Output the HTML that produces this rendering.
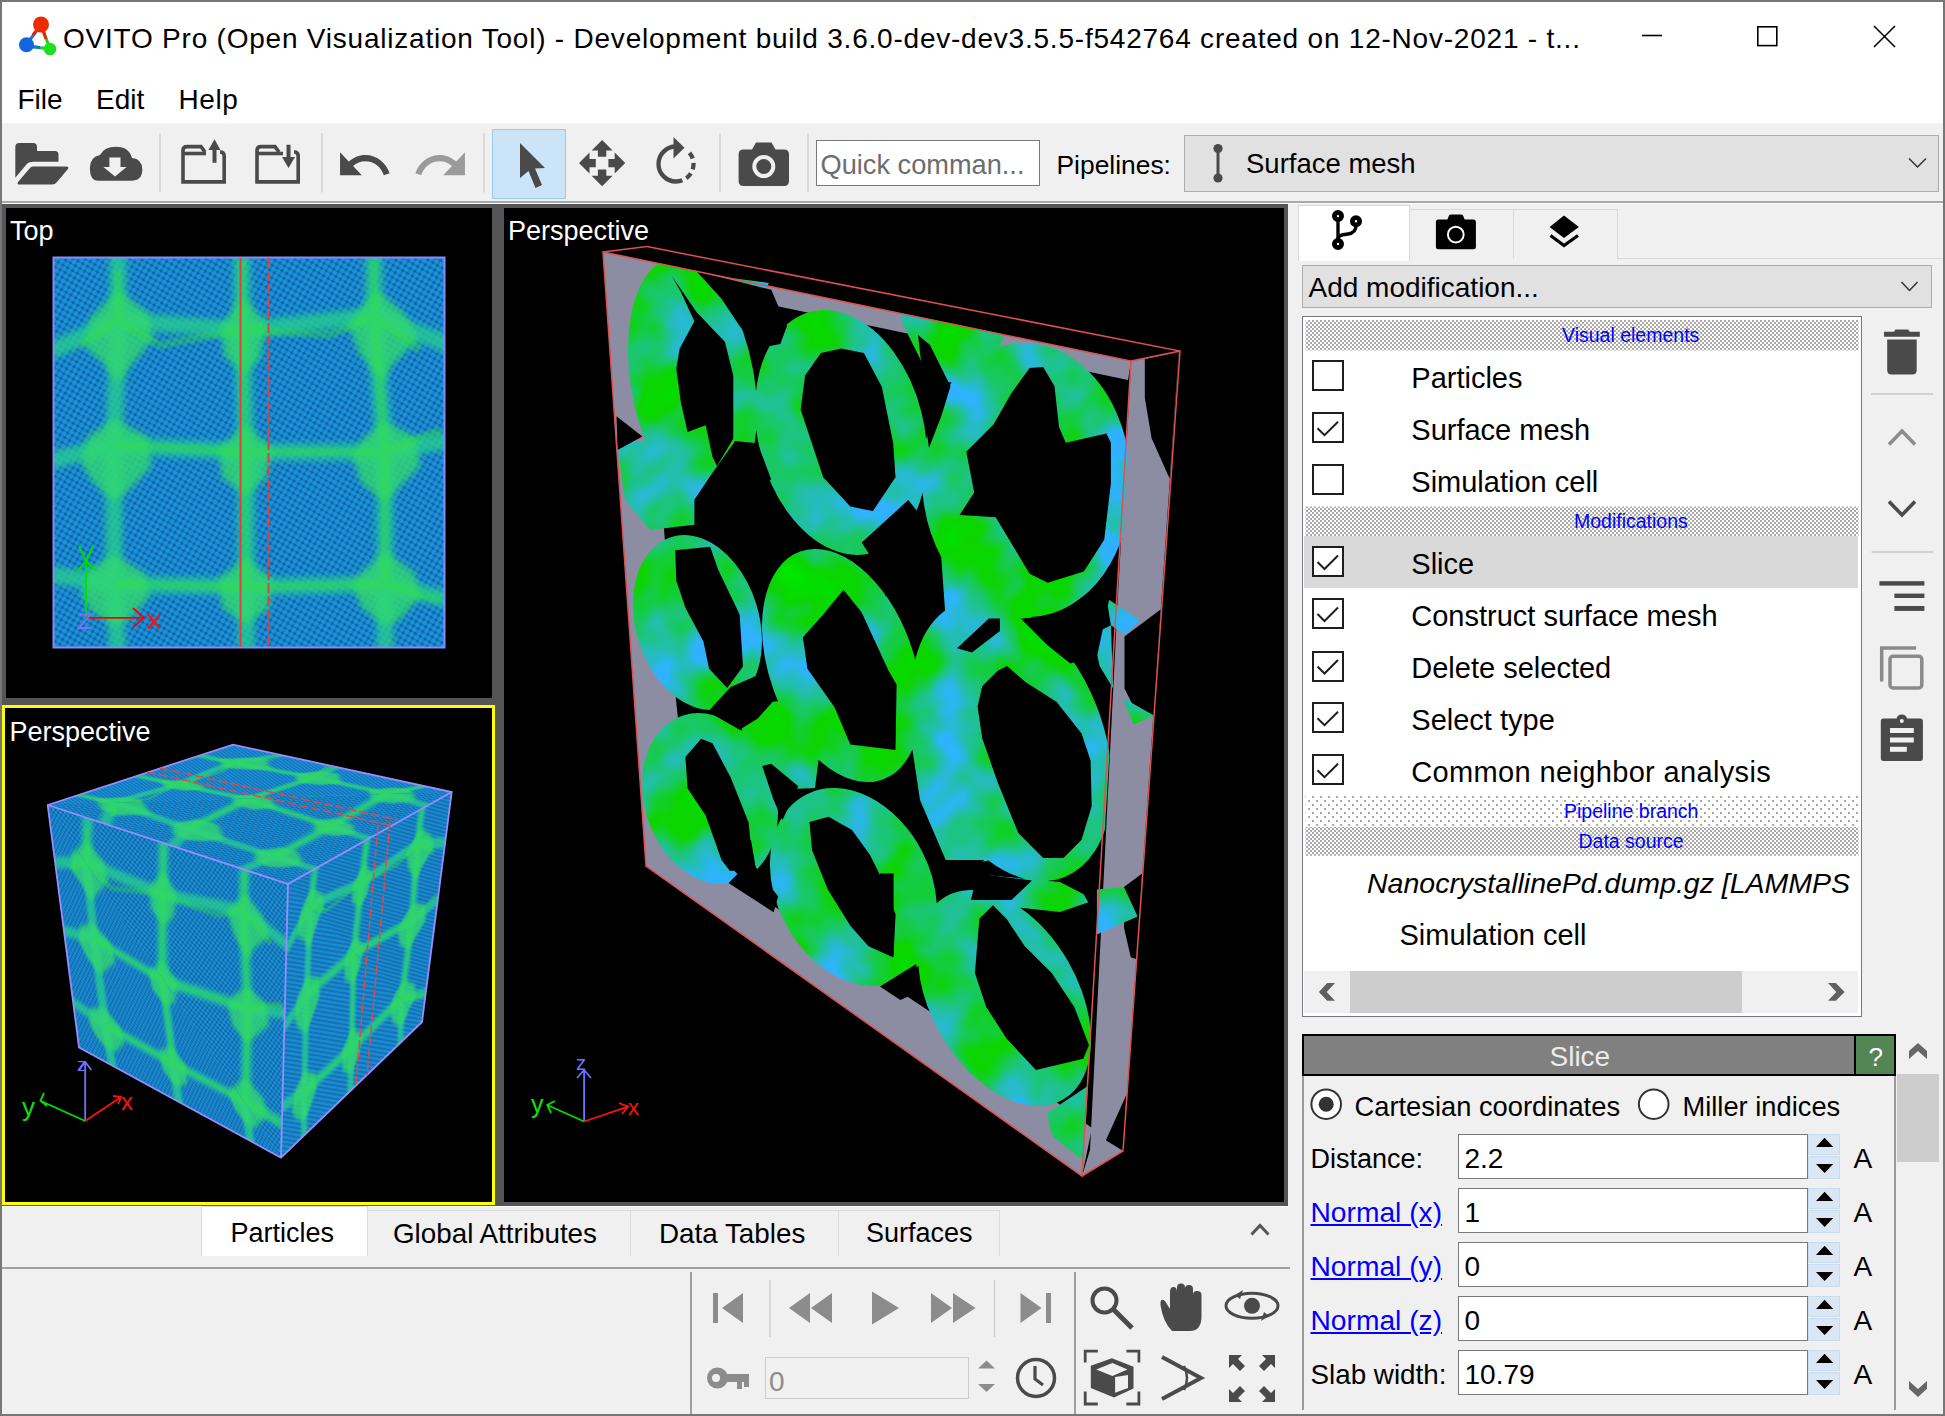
<!DOCTYPE html>
<html><head><meta charset="utf-8">
<style>
*{box-sizing:border-box}
html,body{margin:0;padding:0}
body{width:1945px;height:1416px;position:relative;overflow:hidden;background:#f0f0f0;font-family:"Liberation Sans",sans-serif;color:#000}
.a{position:absolute}
.t{position:absolute;white-space:pre;line-height:1}
svg{position:absolute;overflow:visible}
</style></head><body>

<!-- title bar -->
<div class="a" style="left:0;top:0;width:1945px;height:123px;background:#fff"></div>
<div class="a" style="left:0;top:123px;width:1945px;height:2px;background:#f4f4f4"></div>


<!-- logo -->
<svg style="left:0;top:0" width="80" height="70">
 <line x1="41" y1="24.5" x2="26.5" y2="44.6" stroke="#1a6fe8" stroke-width="3"/>
 <line x1="41" y1="24.5" x2="33" y2="35" stroke="#f02000" stroke-width="3"/>
 <line x1="41" y1="24.5" x2="50" y2="49" stroke="#20d020" stroke-width="3"/>
 <line x1="41" y1="24.5" x2="46" y2="39" stroke="#f02000" stroke-width="3"/>
 <line x1="26.5" y1="46" x2="50" y2="49" stroke="#20d020" stroke-width="3"/>
 <line x1="26.5" y1="46" x2="40" y2="47.5" stroke="#1a6fe8" stroke-width="3"/>
 <circle cx="41" cy="24.5" r="8" fill="#f02a00"/>
 <circle cx="26.5" cy="44.8" r="7.5" fill="#1464e0"/>
 <circle cx="50" cy="49" r="6.3" fill="#1ee01e"/>
</svg>
<div class="t" style="left:63px;top:25px;font-size:28px;letter-spacing:0.78px">OVITO Pro (Open Visualization Tool) - Development build 3.6.0-dev-dev3.5.5-f542764 created on 12-Nov-2021 - t...</div>
<svg style="left:0;top:0" width="1945" height="70">
 <line x1="1642" y1="35.5" x2="1662" y2="35.5" stroke="#000" stroke-width="1.6"/>
 <rect x="1757.8" y="26.8" width="19" height="18.8" fill="none" stroke="#000" stroke-width="1.6"/>
 <path d="M1874,26 L1895,47 M1895,26 L1874,47" stroke="#000" stroke-width="1.6"/>
</svg>
<!-- menu -->
<div class="t" style="left:17.5px;top:86px;font-size:28px">File</div>
<div class="t" style="left:96px;top:86px;font-size:28px">Edit</div>
<div class="t" style="left:178.5px;top:86px;font-size:28px;letter-spacing:0.6px">Help</div>

<!-- toolbar -->
<div class="a" style="left:492px;top:128.5px;width:74px;height:70px;background:#cce4f7;border:1px solid #99c9ef"></div>
<svg style="left:0;top:0" width="1945" height="210">
 <g fill="#4a4a4a">
  <path d="M15.3,177.8 V147 Q15.3,143 19.5,143 H33 Q37,143 37,147 V151 H55 Q58.5,151 58.5,154.5 V161.7 H33 Q28.5,161.7 26,165 Z"/>
  <path d="M33,166.5 H66 Q70,166.5 67.5,169.5 L57,182 Q55,184.6 52,184.6 H20 Q16,184.6 18.5,181.5 L29.5,168.5 Q31,166.5 33,166.5 Z"/>
  <!-- cloud -->
  <path d="M98,180.8 Q89.9,180.8 89.9,168 Q89.9,157 100,155 Q104,146.7 116,146.7 Q129,146.7 132,158 Q142.3,159 142.3,169.5 Q142.3,180.8 131,180.8 Z"/>
 </g>
 <path d="M109.4,157.4 H120.5 V167 H126.6 L115,176.6 L103.4,167 H109.4 Z" fill="#f0f0f0"/>
 <g stroke="#d2d2d2" stroke-width="1.5"><line x1="160" y1="133" x2="160" y2="192.5"/><line x1="322" y1="133" x2="322" y2="192.5"/><line x1="484" y1="133" x2="484" y2="192.5"/><line x1="720" y1="133" x2="720" y2="192.5"/><line x1="808" y1="133" x2="808" y2="192.5"/></g>
 <!-- export/import folders -->
 <g fill="none" stroke="#4a4a4a" stroke-width="3.6">
  <path d="M205,152 L201,146.6 H187 Q183,146.6 183,150.6 V181.9 H224.2 V156 Q224.2,152 220,152"/>
  <path d="M183,153.5 H206"/>
  <path d="M279,152 L275,146.6 H261 Q257,146.6 257,150.6 V181.9 H298.2 V156 Q298.2,152 294,152"/>
  <path d="M257,153.5 H283"/>
 </g>
 <g fill="#4a4a4a">
  <path d="M212.5,162.7 V150 H208.5 L214.5,139.3 L220.5,150 H216.5 V162.7 Z"/>
  <path d="M286.5,144.8 V157 H282 L288.5,168 L295,157 H290.5 V144.8 Z"/>
 </g>
 <!-- undo redo -->
 <g transform="translate(335.2,134.4) scale(2.42,2.56)"><path fill="#4a4a4a" d="M12.5 8c-2.65 0-5.05.99-6.9 2.6L2 7v9h9l-3.62-3.62c1.39-1.16 3.16-1.88 5.12-1.88 3.54 0 6.55 2.31 7.6 5.5l2.37-.78C21.08 11.03 17.15 8 12.5 8z"/></g>
 <g transform="translate(469.8,134.4) scale(-2.42,2.56)"><path fill="#9b9b9b" d="M12.5 8c-2.65 0-5.05.99-6.9 2.6L2 7v9h9l-3.62-3.62c1.39-1.16 3.16-1.88 5.12-1.88 3.54 0 6.55 2.31 7.6 5.5l2.37-.78C21.08 11.03 17.15 8 12.5 8z"/></g>
 <!-- cursor -->
 <path fill="#4a4a4a" d="M520,143 L520,178 L528.5,171 L535.5,188 L542,185 L535,168.5 L545,168 Z"/>
 <!-- move -->
 <g transform="translate(576.9,137.9) scale(2.1)"><path fill="#4a4a4a" d="M10 9h4V6h3l-5-5-5 5h3v3zm-1 1H6V7l-5 5 5 5v-3h3v-4zm14 2l-5-5v3h-3v4h3v3l5-5zm-9 3h-4v3H7l5 5 5-5h-3v-3z"/></g>
 <!-- rotate -->
 <path d="M676,146.5 A17.5,17.5 0 0 0 676,181.5" fill="none" stroke="#4a4a4a" stroke-width="4.3"/>
 <path d="M676,181.5 A17.5,17.5 0 0 0 688.4,151.6" fill="none" stroke="#4a4a4a" stroke-width="4.3" stroke-dasharray="6.5,4.5"/>
 <path d="M673.5,137 L684.5,147.7 L673.5,158.5 Z" fill="#4a4a4a"/>
 <!-- camera -->
 <path fill="#4a4a4a" d="M752,149.5 L756,142.5 H771.5 L775.5,149.5 H784 Q789,149.5 789,154.5 V181 Q789,186 784,186 H743.5 Q738.6,186 738.6,181 V154.5 Q738.6,149.5 743.5,149.5 Z"/>
 <circle cx="763.8" cy="166.5" r="9.5" fill="none" stroke="#f0f0f0" stroke-width="4"/>
</svg>
<div class="a" style="left:816px;top:140px;width:224px;height:46px;background:#fff;border:1px solid #7a7a7a"></div>
<div class="t" style="left:820.5px;top:151px;font-size:27.2px;color:#6d6d6d">Quick comman...</div>
<div class="t" style="left:1056.5px;top:152px;font-size:26.4px">Pipelines:</div>
<div class="a" style="left:1184px;top:134.5px;width:755px;height:57px;background:#e1e1e1;border:1px solid #adadad"></div>
<svg style="left:0;top:0" width="1945" height="210">
 <line x1="1218" y1="148" x2="1218" y2="178" stroke="#4a4a4a" stroke-width="3"/>
 <circle cx="1218" cy="148.5" r="4.6" fill="#4a4a4a"/><circle cx="1218" cy="178" r="4.6" fill="#4a4a4a"/>
 <path d="M1909,158.5 L1917.5,167 L1926,158.5" fill="none" stroke="#333" stroke-width="1.5"/>
</svg>
<div class="t" style="left:1246px;top:150px;font-size:27.5px">Surface mesh</div>
<!-- toolbar bottom lines -->
<div class="a" style="left:0;top:201px;width:1945px;height:2px;background:#a9a9a9"></div>
<div class="a" style="left:0;top:203px;width:1945px;height:1px;background:#fafafa"></div>

<!-- viewport area -->
<div class="a" style="left:2px;top:204px;width:1286px;height:1002px;background:#555"></div>


<!-- viewports -->
<div class="a" style="left:6px;top:208px;width:486px;height:490px;background:#000"></div>
<div class="a" style="left:2px;top:705px;width:493px;height:500px;background:#000;border:3.5px solid #ff0"></div>
<div class="a" style="left:504px;top:208px;width:780px;height:994px;background:#000"></div>
<svg style="left:0;top:0" width="1945" height="1416">
 <defs>
  <pattern id="atoms" width="5.5" height="5.5" patternUnits="userSpaceOnUse" patternTransform="rotate(30)">
   <rect width="5.5" height="5.5" fill="#10609c"/>
   <circle cx="2.75" cy="2.75" r="2.5" fill="#1b92dc"/>
  </pattern>
  <filter id="bl3"><feGaussianBlur stdDeviation="3"/></filter>
  <filter id="bl1"><feGaussianBlur stdDeviation="1.2"/></filter>
  <clipPath id="topclip"><rect x="53" y="257" width="392" height="391"/></clipPath>
 </defs>
 <!-- TOP VIEW -->
 <g id="tv">
 <rect x="53" y="257" width="392" height="391" fill="url(#atoms)"/>
 <g clip-path="url(#topclip)" id="topnet">
  <g fill="none" stroke="#26cc90" stroke-width="17" stroke-linejoin="round" stroke-linecap="round" filter="url(#bl3)" opacity="0.8">
   <path d="M118,250 L118,320 L53,350 M118,320 L242,330 L374,316 L450,345 M242,250 L242,330 L246,452 L246,587 L246,660 M374,250 L374,316 L385,452 L385,584 L385,660 M118,320 L114,445 L53,460 M114,445 L246,452 L385,452 L450,440 M114,445 L114,584 L53,575 M114,584 L246,587 L385,584 L450,600 M114,584 L118,660"/>
  </g>
  <g fill="#30d870" filter="url(#bl3)" opacity="0.8">
   <path d="M118.0,289.8 L147.5,312.3 L153.4,338.9 L131.0,365.4 L118.0,383.1 L102.7,362.5 L85.0,347.7 L89.6,318.2 Z"/>
   <path d="M242.9,296.6 L266.5,323.2 L260.6,358.6 L245.1,373.4 L223.9,355.7 L221.0,326.1 Z"/>
   <path d="M376.5,289.8 L403.6,312.3 L418.4,338.9 L391.8,365.4 L383.0,383.1 L359.3,353.6 L347.5,324.1 Z"/>
   <path d="M114.0,418.7 L147.0,436.4 L151.8,465.9 L129.3,489.5 L114.0,501.3 L93.9,483.6 L81.0,463.0 L88.0,436.4 Z"/>
   <path d="M246.0,424.6 L272.0,448.2 L266.1,477.7 L246.0,495.4 L221.8,477.7 L218.9,448.2 Z"/>
   <path d="M385.0,421.6 L414.5,436.4 L420.4,465.9 L399.8,486.6 L385.0,501.3 L361.4,483.6 L352.5,457.0 L364.3,436.4 Z"/>
   <path d="M114.0,554.6 L144.1,572.3 L150.0,595.9 L129.3,619.5 L114.0,625.4 L93.9,613.6 L81.0,595.9 L88.0,569.3 Z"/>
   <path d="M246.0,557.5 L272.0,578.2 L269.0,607.7 L246.0,624.3 L221.8,607.7 L218.9,578.2 Z"/>
   <path d="M385.0,551.6 L414.5,572.3 L420.4,595.9 L399.8,619.5 L385.0,625.4 L361.4,607.7 L352.5,584.1 L364.3,569.3 Z"/>
  </g>
  <g fill="none" stroke="#30e040" stroke-width="8" stroke-linejoin="round" filter="url(#bl1)" opacity="0.35">
   <path d="M118,270 L118,320 L80,345 M118,320 L160,345 L242,330 L330,335 L374,316 L420,350 M242,260 L246,587 M374,260 L374,316 L385,452 L385,584 M114,445 L246,452 L385,452 L440,430 M114,584 L246,587 L385,584 L440,600"/>
  </g>
 </g>
 </g>
 <rect x="53.5" y="257.5" width="391" height="390" fill="none" stroke="#8a8aff" stroke-width="2"/>
 <line x1="240.5" y1="258" x2="240.5" y2="647" stroke="#e04040" stroke-width="2"/>
 <line x1="268.5" y1="258" x2="268.5" y2="647" stroke="#e04040" stroke-width="2" stroke-dasharray="10,3"/>
 <g stroke-width="1.8" fill="none">
  <path d="M86,617.8 V561 M76.3,572 L86,561 L95.7,570.4 M79,546 L86,561 L93,546" stroke="#00e000"/>
  <path d="M86,617.8 H143.9 M133,608 L143.9,617.8 L133,627.5" stroke="#ff0000"/>
  <path d="M79,614.5 H90.5 L79,628 H90.5" stroke="#8070ff"/>
  <path d="M148,614.5 L160,628.5 M160,614.5 L148,628.5" stroke="#ff1010" stroke-width="2.2"/>
 </g>

 <!-- CUBE -->
 <polygon points="47.7,805.0 233.0,744.6 451.7,792.0 422.0,1022.0 281.0,1157.7 79.0,1047.5" fill="#1b8fd8"/>
 <clipPath id="c_left"><polygon points="47.7,805.0 288.0,884.0 281.0,1157.7 79.0,1047.5"/></clipPath>
 <g clip-path="url(#c_left)"><g transform="matrix(0.61301,0.20153,0.08005,0.62020,-5.36,634.93)"><use href="#tv"/></g></g>
 <clipPath id="c_left1"><polygon points="47.7,805.0 288.0,884.0 281.0,1157.7"/></clipPath>
 <g clip-path="url(#c_left1)"><g transform="matrix(0.61301,0.20153,-0.01790,0.70000,19.81,614.42)"><use href="#tv"/></g></g>
 <clipPath id="c_left2"><polygon points="47.7,805.0 281.0,1157.7 79.0,1047.5"/></clipPath>
 <g clip-path="url(#c_left2)"><g transform="matrix(0.51531,0.28112,0.08005,0.62020,-0.18,630.71)"><use href="#tv"/></g></g>
 <clipPath id="c_right"><polygon points="288.0,884.0 451.7,792.0 422.0,1022.0 281.0,1157.7"/></clipPath>
 <g clip-path="url(#c_right)"><g transform="matrix(0.41760,-0.23469,-0.01790,0.70000,270.47,716.54)"><use href="#tv"/></g></g>
 <clipPath id="c_right1"><polygon points="288.0,884.0 451.7,792.0 422.0,1022.0"/></clipPath>
 <g clip-path="url(#c_right1)"><g transform="matrix(0.41760,-0.23469,-0.07596,0.58824,285.39,745.26)"><use href="#tv"/></g></g>
 <clipPath id="c_right2"><polygon points="288.0,884.0 422.0,1022.0 281.0,1157.7"/></clipPath>
 <g clip-path="url(#c_right2)"><g transform="matrix(0.35969,-0.34617,-0.01790,0.70000,273.54,722.45)"><use href="#tv"/></g></g>
 <clipPath id="c_top"><polygon points="47.7,805.0 233.0,744.6 451.7,792.0 288.0,884.0"/></clipPath>
 <g clip-path="url(#c_top)"><g transform="matrix(0.47270,-0.15408,0.61458,0.20205,-135.30,761.24)"><use href="#tv"/></g></g>
 <clipPath id="c_top1"><polygon points="47.7,805.0 233.0,744.6 451.7,792.0"/></clipPath>
 <g clip-path="url(#c_top1)"><g transform="matrix(0.47270,-0.15408,0.55934,0.12123,-121.10,782.01)"><use href="#tv"/></g></g>
 <clipPath id="c_top2"><polygon points="47.7,805.0 451.7,792.0 288.0,884.0"/></clipPath>
 <g clip-path="url(#c_top2)"><g transform="matrix(0.41760,-0.23469,0.61458,0.20205,-132.38,765.51)"><use href="#tv"/></g></g>
 <g fill="none" stroke="#9a8cff" stroke-width="1.8">
  <polygon points="47.7,805 233,744.6 451.7,792 422,1022 281,1157.7 79,1047.5"/>
  <polyline points="47.7,805 288,884 451.7,792"/>
  <line x1="288" y1="884" x2="281" y2="1157.7"/>
 </g>
 <g fill="none" stroke="#e04848" stroke-width="1.5" stroke-dasharray="9,3">
  <line x1="147" y1="772" x2="389" y2="825"/>
  <line x1="160" y1="768" x2="398" y2="820"/>
  <line x1="378" y1="825" x2="356" y2="1084"/>
  <line x1="390" y1="822" x2="367" y2="1075"/>
 </g>
 <g stroke-width="1.8" fill="none">
  <path d="M85.2,1121 V1062 M79,1070 L85.2,1062 L91.4,1070" stroke="#7070ff"/>
  <path d="M85.2,1121 L40.4,1100.8 M44,1093 L40.4,1100.8 L47,1106" stroke="#00e000"/>
  <path d="M85.2,1121 L121,1097 M113,1096 L121,1097 L118,1104" stroke="#ff1010"/>
 </g>
 <text x="77" y="1071" font-family="Liberation Sans" font-size="19" fill="#7070ff">z</text>
 <text x="22" y="1116" font-family="Liberation Sans" font-size="26" fill="#10e010">y</text>
 <text x="121" y="1110" font-family="Liberation Sans" font-size="24" fill="#ff1010">x</text>



 <!-- MAIN SLAB -->
 <defs>
  <filter id="ringtex" x="0" y="0" width="100%" height="100%" filterUnits="objectBoundingBox" color-interpolation-filters="sRGB">
   <feTurbulence type="fractalNoise" baseFrequency="0.013" numOctaves="3" seed="5" result="n"/>
   <feColorMatrix in="n" type="matrix" values="0.3 0 0 0 -0.05  -0.3 0 0 0 0.93  2.3 0 0 0 -0.74  0 0 0 0 1"/>
  </filter>
  <clipPath id="greenclip"><polygon points="603,252 1133,361 1084,1176 646,866"/></clipPath>
  <clipPath id="chunkclip"><polygon points="735.1,278.4 769.0,282.9 757.7,301.0"/>
   <polygon points="1106.4,598.1 1140.3,620.7 1124.5,634.2 1110.9,625.2"/>
   <polygon points="1092.9,634.2 1110.9,625.2 1113.2,688.5 1099.6,665.9"/>
   <polygon points="1122.2,697.5 1153.9,715.6 1133.5,724.6"/>
   <polygon points="1096.9,889.4 1124.0,887.1 1137.6,916.5 1096.9,934.6"/>
   <polygon points="1047.2,1113.0 1087.9,1086.0 1083.3,1160.5 1051.7,1135.6"/></clipPath>
 </defs>
 <g fill="#8c8ca2">
   <polygon points="603,252 652,262 662,500 676,700 694,872 646,866"/>
   <polygon points="646,866 695,848 800,925 950,1025 1092,1128 1082,1176"/>
   <polygon points="603,252 1131,361 1128,380 615,272"/>
   <polygon points="1131.3,361 1178.7,352.3 1123,1151 1082,1176 1090,1150 1117.7,600"/>
 </g>
 <g fill="#000">
   <polygon points="1144.8,359.0 1178.7,352.3 1169.7,478.8 1151.6,438.2 1144.8,397.5"/>
   <polygon points="1124.5,636.5 1160.6,609.4 1153.9,715.6 1133.5,706.5 1124.5,688.5"/>
   <polygon points="1105.9,1140.2 1124.0,1151.5 1126.3,1095.0"/>
   <polygon points="1124.0,887.1 1142.1,873.6 1137.7,959.4 1130.8,957.2 1124.0,927.8"/>
 </g>
 <clipPath id="ringsclip">
   <ellipse cx="692.5" cy="381.5" rx="124.9" ry="61.7" transform="rotate(80 692.5 381.5)"/><ellipse cx="841.0" cy="432.5" rx="124.5" ry="83.0" transform="rotate(76 841.0 432.5)"/><ellipse cx="1026.5" cy="480.0" rx="137.0" ry="104.5" transform="rotate(88 1026.5 480.0)"/><ellipse cx="697.5" cy="622.5" rx="89.5" ry="61.6" transform="rotate(73 697.5 622.5)"/><ellipse cx="841.5" cy="665.5" rx="121.2" ry="72.2" transform="rotate(70 841.5 665.5)"/><ellipse cx="1011.5" cy="740.0" rx="146.9" ry="91.7" transform="rotate(69 1011.5 740.0)"/><ellipse cx="710.0" cy="798.5" rx="87.3" ry="65.6" transform="rotate(72 710.0 798.5)"/><ellipse cx="853.5" cy="887.0" rx="103.9" ry="77.3" transform="rotate(63 853.5 887.0)"/><ellipse cx="1004.5" cy="998.0" rx="117.3" ry="73.4" transform="rotate(60 1004.5 998.0)"/>
   <polygon points="898.8,298.5 1007.0,322.4 1000.8,344.8 956.0,383.0 930.7,380.0 902.0,322.4"/>
   <polygon points="617.0,443.0 660.0,440.0 694.0,470.0 700.0,524.0 650.0,530.0 625.0,500.0"/>
   <polygon points="739.6,705.0 790.0,700.0 821.0,740.0 815.0,788.0 770.0,790.0 745.0,760.0"/>
   <polygon points="985.0,875.0 1060.0,882.0 1095.0,900.0 1060.0,912.0 995.0,905.0"/>
   <polygon points="905.0,700.0 960.0,690.0 985.0,760.0 990.0,860.0 950.0,870.0 920.0,800.0"/>
   <polygon points="940.0,540.0 985.0,560.0 975.0,620.0 945.0,610.0"/>
 </clipPath>
 <g clip-path="url(#greenclip)"><g clip-path="url(#ringsclip)">
  <rect x="580" y="230" width="620" height="960" fill="#14d858" filter="url(#ringtex)"/>
 </g></g>
 <g clip-path="url(#chunkclip)">
  <rect x="580" y="230" width="620" height="960" fill="#14d858" filter="url(#ringtex)"/>
 </g>
 <g fill="#000">
   <polygon points="671.8,276.1 696.7,312.3 724.9,341.7 733.3,375.6 733.3,438.8 717.0,465.9 712.5,456.9 705.7,425.3 687.6,432.0 680.9,402.7 676.3,368.8 679.7,348.5 694.4,321.3 680.9,292.0"/>
   <polygon points="841.3,348.5 863.9,353.0 881.9,386.9 893.2,443.3 895.5,477.2 872.9,511.1 850.3,506.6 823.2,477.2 800.6,409.5 805.1,375.6 820.9,353.0"/>
   <polygon points="1029.6,368.1 1043.2,367.0 1054.5,386.2 1059.0,426.9 1065.8,442.7 1106.4,433.6 1110.9,442.7 1110.9,483.3 1104.2,539.8 1083.8,571.5 1047.7,582.8 1029.6,573.7 1016.0,551.1 995.7,517.2 959.6,515.0 974.2,492.4 966.3,451.7 993.5,424.6 1011.5,393.0"/>
   <polygon points="675.2,550.2 710.2,546.8 718.1,569.4 739.6,614.6 743.0,666.5 727.2,688.0 709.1,668.8 703.5,641.7 685.4,607.8 676.3,580.7"/>
   <polygon points="802.9,637.2 823.2,614.6 843.5,589.7 861.6,612.3 888.7,671.0 896.6,684.6 895.5,750.1 850.3,744.5 834.5,707.2 807.4,668.8"/>
   <polygon points="1007.0,665.9 1025.1,681.7 1056.7,702.0 1081.6,733.6 1090.6,760.8 1091.7,805.9 1081.6,839.8 1063.5,857.9 1043.2,857.9 1018.3,833.0 998.0,783.3 982.2,738.2 977.6,706.5 982.2,686.2 998.0,670.4"/>
   <polygon points="701.2,738.8 712.5,743.3 730.6,777.2 748.6,822.4 753.2,868.0 730.0,871.0 721.5,860.0 705.7,815.6 687.6,788.5 685.4,756.9"/>
   <polygon points="809.5,822.0 828.6,816.8 852.0,830.0 870.0,855.0 885.0,885.0 895.6,914.6 893.4,957.5 868.5,946.2 850.5,925.9 827.9,889.7 812.0,850.0"/>
   <polygon points="993.0,905.2 979.4,918.7 974.9,973.0 986.2,1006.9 1006.5,1038.5 1035.9,1070.1 1083.3,1058.8 1089.0,1045.3 1074.3,1006.9 1051.7,973.0 1024.6,945.9 1006.5,918.7"/>
   <polygon points="696.7,271.6 735.1,280.7 771.2,289.7 787.0,325.9 780.3,343.9 757.7,348.5 739.6,325.9 721.5,298.7"/>
   <polygon points="735.1,441.1 757.7,443.3 771.2,479.5 739.6,488.5 732.8,522.4 694.4,524.7 694.4,499.8 712.5,472.7"/>
   <polygon points="918,335 930,345 950.5,386.2 941.5,415.6 929,448 925,420 922,370"/>
   <polygon points="885.0,524.0 909.9,530.8 903.1,580.5 885.0,596.3"/>
   <polygon points="730.6,686.9 762.2,673.3 775.8,698.2 757.7,718.5 739.6,729.8 708.0,711.7"/>
   <polygon points="762.2,765.9 771.2,763.7 798.3,786.3 782.5,820.1 773.5,799.8"/>
   <polygon points="1020.6,618.4 1056.7,616.1 1101.9,582.3 1110.9,591.3 1097.4,654.6 1070.3,663.6 1047.7,645.5"/>
   <polygon points="861.7,542.4 908.3,500 925.3,521.2 904.1,576.3 914.7,627.1 891.4,589"/>
   <polygon points="957,648.3 988.8,618.6 1000,618.6 1000,631 971.9,652.5"/>
   <polygon points="977.6,873.7 1031.9,880.5 1011.5,900.0 970.9,900.0"/>
   <polygon points="936.0,860.0 984.0,860.0 975.0,873.6 940.0,873.6"/>
   <polygon points="880.0,873.6 893.6,873.6 893.6,955.0 880.0,950.0"/>
   <polygon points="717.2,840.0 751.0,840.0 755.6,867.1 778.2,896.5 773.6,912.3 728.5,882.9 737.5,873.9 723.9,860.3"/>
   <polygon points="880.0,986.5 916.1,963.9 920.7,991.0 900.3,1000.0"/>
   <polygon points="1051.7,912.0 1094.6,932.3 1090.1,986.5 1074.3,959.4 1056.2,927.8"/>
   <polygon points="1072.0,873.6 1096.9,882.6 1092.4,909.7"/>
   <polygon points="616.5,416.2 642.4,436.6 617.6,450.1"/>
 </g>
 <g fill="none" stroke="#e05050" stroke-width="1.5">
  <polygon points="603,252 1131,361 1082,1176 646,866"/>
  <polyline points="647,246.6 1180,351 1123,1151 1082,1176"/>
  <line x1="603" y1="252" x2="647" y2="246.6"/>
  <line x1="1131" y1="361" x2="1180" y2="351"/>
 </g>
 <!-- main tripod -->
 <g stroke-width="1.8" fill="none">
  <path d="M584.1,1121.5 V1070 M577,1078 L584.1,1070 L591,1078" stroke="#7070ff"/>
  <path d="M584.1,1121.5 L547.3,1105 M555,1101 L547.3,1105 L551,1113" stroke="#00e000"/>
  <path d="M584.1,1121.5 L628,1106.6 M619,1103 L628,1106.6 L622,1114" stroke="#ff1010"/>
 </g>
 <text x="576" y="1070" font-family="Liberation Sans" font-size="20" fill="#7070ff">z</text>
 <text x="531" y="1113" font-family="Liberation Sans" font-size="25" fill="#10e010">y</text>
 <text x="628" y="1115" font-family="Liberation Sans" font-size="22" fill="#ff1010">x</text>
</svg>
<div class="t" style="left:10px;top:218px;font-size:27px;color:#fff">Top</div>
<div class="t" style="left:9.5px;top:719px;font-size:27px;color:#fff">Perspective</div>
<div class="t" style="left:508px;top:218px;font-size:27px;color:#fff">Perspective</div>

<!-- RIGHT PANEL -->
<div class="a" style="left:1288px;top:204px;width:655px;height:1210px;background:#f0f0f0"></div>
<div class="a" style="left:1409.5px;top:258.3px;width:534px;height:1px;background:#d9d9d9"></div>
<div class="a" style="left:1409.5px;top:208.6px;width:104.5px;height:50.5px;background:#f0f0f0;border-top:1px solid #d9d9d9;border-right:1px solid #d9d9d9"></div>
<div class="a" style="left:1513.5px;top:208.6px;width:104px;height:50.5px;background:#f0f0f0;border-top:1px solid #d9d9d9;border-right:1px solid #d9d9d9"></div>
<div class="a" style="left:1298px;top:204.5px;width:111.5px;height:56px;background:#fff;border:1px solid #d9d9d9;border-bottom:none"></div>
<svg style="left:0;top:0" width="1945" height="1416">
 <!-- branch icon -->
 <g fill="none" stroke="#000" stroke-width="3.4">
  <circle cx="1338" cy="216.1" r="3.6" stroke-width="4.8"/><circle cx="1338" cy="243.9" r="3.6" stroke-width="4.8"/><circle cx="1356" cy="221.3" r="3.6" stroke-width="4.8"/>
  <path d="M1338,220.5 V239.5"/>
  <path d="M1356,225.6 Q1356,233 1348,234 L1343,234.7 Q1338,235.5 1338,239"/>
 </g>
 <!-- camera icon -->
 <path fill="#000" d="M1447.4,219.4 L1449,215.5 Q1449.5,214.4 1451,214.4 H1461 Q1462.5,214.4 1463,215.5 L1464.7,219.4 H1473.4 Q1475.9,219.4 1475.9,222 V246.7 Q1475.9,249.2 1473.4,249.2 H1438.4 Q1435.9,249.2 1435.9,246.7 V222 Q1435.9,219.4 1438.4,219.4 Z"/>
 <circle cx="1455.8" cy="234.6" r="7.9" fill="none" stroke="#fff" stroke-width="1.9"/>
 <!-- layers icon -->
 <path fill="#000" d="M1564,215.5 L1578.9,227 L1564,238 L1549.6,227 Z"/>
 <path fill="none" stroke="#000" stroke-width="3.2" d="M1550.5,235.5 L1564,245.5 L1578,235.5"/>
</svg>
<div class="a" style="left:1302px;top:264.6px;width:630px;height:43px;background:#e1e1e1;border:1px solid #adadad"></div>
<div class="t" style="left:1308.5px;top:274px;font-size:28px">Add modification...</div>
<svg style="left:0;top:0" width="1945" height="1416"><path d="M1901.5,282 L1909.5,290.5 L1917.5,282" fill="none" stroke="#333" stroke-width="1.5"/></svg>
<!-- list box -->
<div class="a" style="left:1302px;top:316px;width:559.5px;height:701px;background:#fff;border:1px solid #76767e"></div>
<svg style="left:0;top:0" width="1945" height="1416">
 <defs>
  <pattern id="chk" width="4" height="4" patternUnits="userSpaceOnUse"><rect width="4" height="4" fill="#fff"/><rect x="0" y="0" width="2" height="2" fill="#a9a9a9"/><rect x="2" y="2" width="2" height="2" fill="#a9a9a9"/></pattern>
  <pattern id="spr" width="8" height="8" patternUnits="userSpaceOnUse"><rect width="8" height="8" fill="#fff"/><rect x="0" y="4" width="2" height="2" fill="#a9a9a9"/><rect x="4" y="0" width="2" height="2" fill="#a9a9a9"/></pattern>
 </defs>
 <rect x="1305.5" y="320" width="553" height="30.5" fill="url(#chk)"/>
 <rect x="1305.5" y="506.5" width="553" height="29.5" fill="url(#chk)"/>
 <rect x="1305.5" y="796" width="553" height="31" fill="url(#spr)"/>
 <rect x="1305.5" y="827" width="553" height="28.8" fill="url(#chk)"/>
</svg>
<div class="a" style="left:1304px;top:536px;width:554px;height:51.6px;background:#d9d9d9"></div>
<div class="t" style="left:1562px;top:326px;font-size:19.5px;color:#0000ff">Visual elements</div>
<div class="t" style="left:1574px;top:512px;font-size:19.5px;color:#0000ff">Modifications</div>
<div class="t" style="left:1564px;top:802px;font-size:19.5px;color:#0000ff">Pipeline branch</div>
<div class="t" style="left:1578.5px;top:832px;font-size:19.5px;color:#0000ff">Data source</div>
<div class="t" style="left:1411.3px;top:364px;font-size:29px">Particles</div>
<div class="a" style="left:1312px;top:360.2px;width:31.5px;height:31px;border:2px solid #1e1e1e;background:#fff"></div>
<div class="t" style="left:1411.3px;top:416px;font-size:29px">Surface mesh</div>
<div class="a" style="left:1312px;top:412.2px;width:31.5px;height:31px;border:2px solid #1e1e1e;background:#fff"></div>
<svg style="left:0;top:0" width="1945" height="1416"><path d="M1317.5,428.2 L1324.5,435.2 L1338,421.7" fill="none" stroke="#1e1e1e" stroke-width="2"/></svg>
<div class="t" style="left:1411.3px;top:468px;font-size:29px">Simulation cell</div>
<div class="a" style="left:1312px;top:464.2px;width:31.5px;height:31px;border:2px solid #1e1e1e;background:#fff"></div>
<div class="t" style="left:1411.3px;top:550px;font-size:29px">Slice</div>
<div class="a" style="left:1312px;top:546.0px;width:31.5px;height:31px;border:2px solid #1e1e1e;background:#fff"></div>
<svg style="left:0;top:0" width="1945" height="1416"><path d="M1317.5,562.0 L1324.5,569.0 L1338,555.5" fill="none" stroke="#1e1e1e" stroke-width="2"/></svg>
<div class="t" style="left:1411.3px;top:602px;font-size:29px">Construct surface mesh</div>
<div class="a" style="left:1312px;top:598.0px;width:31.5px;height:31px;border:2px solid #1e1e1e;background:#fff"></div>
<svg style="left:0;top:0" width="1945" height="1416"><path d="M1317.5,614.0 L1324.5,621.0 L1338,607.5" fill="none" stroke="#1e1e1e" stroke-width="2"/></svg>
<div class="t" style="left:1411.3px;top:654px;font-size:29px">Delete selected</div>
<div class="a" style="left:1312px;top:650.5px;width:31.5px;height:31px;border:2px solid #1e1e1e;background:#fff"></div>
<svg style="left:0;top:0" width="1945" height="1416"><path d="M1317.5,666.5 L1324.5,673.5 L1338,660.0" fill="none" stroke="#1e1e1e" stroke-width="2"/></svg>
<div class="t" style="left:1411.3px;top:706px;font-size:29px">Select type</div>
<div class="a" style="left:1312px;top:702.2px;width:31.5px;height:31px;border:2px solid #1e1e1e;background:#fff"></div>
<svg style="left:0;top:0" width="1945" height="1416"><path d="M1317.5,718.2 L1324.5,725.2 L1338,711.7" fill="none" stroke="#1e1e1e" stroke-width="2"/></svg>
<div class="t" style="left:1411.3px;top:758px;font-size:29px;letter-spacing:0.35px">Common neighbor analysis</div>
<div class="a" style="left:1312px;top:754.2px;width:31.5px;height:31px;border:2px solid #1e1e1e;background:#fff"></div>
<svg style="left:0;top:0" width="1945" height="1416"><path d="M1317.5,770.2 L1324.5,777.2 L1338,763.7" fill="none" stroke="#1e1e1e" stroke-width="2"/></svg>
<div class="t" style="left:1367px;top:869px;font-size:28.5px;font-style:italic">NanocrystallinePd.dump.gz [LAMMPS</div>
<div class="t" style="left:1399.5px;top:921px;font-size:29px">Simulation cell</div>
<!-- h scrollbar -->
<div class="a" style="left:1304px;top:971px;width:554px;height:41.5px;background:#f0f0f0"></div>
<div class="a" style="left:1350px;top:971px;width:391.5px;height:41.5px;background:#cdcdcd"></div>
<svg style="left:0;top:0" width="1945" height="1416">
 <path d="M1335,983.1 H1327.2 L1318.9,992 L1327.2,1000.8 H1335 L1326.7,992 Z" fill="#606060"/>
 <path d="M1828,983.1 H1835.8 L1844.6,992 L1835.8,1000.8 H1828 L1836.3,992 Z" fill="#606060"/>
 <!-- right tool icons -->
 <g fill="#4a4a4a">
  <path d="M1884,331.8 H1894 L1895.5,329.4 H1908.2 L1909.7,331.8 H1919.8 V336.7 H1884 Z"/>
  <path d="M1887.2,339.5 H1916.7 V370 Q1916.7,374.5 1912.2,374.5 H1891.7 Q1887.2,374.5 1887.2,370 Z"/>
 </g>
 <line x1="1871" y1="393.9" x2="1933" y2="393.9" stroke="#c8c8c8" stroke-width="1.5"/>
 <path d="M1889,444.5 L1902,431 L1915,444.5" fill="none" stroke="#8c8c8c" stroke-width="3.6"/>
 <path d="M1889,501.5 L1902,515 L1915,501.5" fill="none" stroke="#4a4a4a" stroke-width="3.6"/>
 <line x1="1871.5" y1="552" x2="1933.3" y2="552" stroke="#c8c8c8" stroke-width="1.5"/>
 <g fill="#4a4a4a">
  <rect x="1879.4" y="581.2" width="45" height="4.4"/>
  <rect x="1894.4" y="593.6" width="30" height="4.4"/>
  <rect x="1894.4" y="606" width="30" height="4.9"/>
 </g>
 <path d="M1881.7,681.5 V648 H1916.1" fill="none" stroke="#8a8a8a" stroke-width="3.5"/>
 <rect x="1890" y="656.3" width="31.8" height="31.7" rx="3" fill="none" stroke="#8a8a8a" stroke-width="3.5"/>
 <path fill="#4a4a4a" d="M1883.5,718.6 H1896.5 A5.5,5.5 0 0 1 1907.1,718.6 H1920.2 Q1922.9,718.6 1922.9,721.3 V758.3 Q1922.9,761 1920.2,761 H1883.5 Q1880.8,761 1880.8,758.3 V721.3 Q1880.8,718.6 1883.5,718.6 Z"/>
 <circle cx="1901.8" cy="721" r="2" fill="#f0f0f0"/>
 <g fill="#f0f0f0"><rect x="1890" y="728" width="23.8" height="5"/><rect x="1890" y="737.5" width="23.8" height="5"/><rect x="1890" y="746.8" width="16.8" height="5"/></g>
</svg>
<!-- SLICE ROLLOUT -->
<div class="a" style="left:1302px;top:1034px;width:594px;height:375.5px;border-left:2px solid #9a9a9a;border-right:2px solid #9a9a9a"></div>
<div class="a" style="left:1302px;top:1034px;width:554px;height:42px;background:#808080;border:2px solid #000;border-right:none"></div>
<div class="a" style="left:1854px;top:1034px;width:42px;height:42px;background:#548554;border:2px solid #000"></div>
<div class="t" style="left:1549.5px;top:1043px;font-size:28px;color:#ececec">Slice</div>
<div class="t" style="left:1868.5px;top:1044px;font-size:26px;color:#fff">?</div>
<div class="a" style="left:1897px;top:1074.3px;width:42px;height:87.6px;background:#cdcdcd"></div>
<svg style="left:0;top:0" width="1945" height="1416"><path d="M1918,1043 L1927,1051 V1059 L1918,1051 L1909,1059 V1051 Z" fill="#666"/><path d="M1909,1381 L1918,1389 L1927,1381 V1388.8 L1918,1397 L1909,1388.8 Z" fill="#666"/><circle cx="1326.2" cy="1104.2" r="14.8" fill="#fff" stroke="#333" stroke-width="2"/><circle cx="1326.2" cy="1104.2" r="7.5" fill="#333"/><circle cx="1653.7" cy="1104.2" r="14.8" fill="#fff" stroke="#333" stroke-width="2"/></svg>
<div class="t" style="left:1354.5px;top:1093px;font-size:27.3px">Cartesian coordinates</div>
<div class="t" style="left:1682.5px;top:1093px;font-size:27.3px">Miller indices</div>
<div class="t" style="left:1310.5px;top:1146px;font-size:27px;color:#000">Distance:</div>
<div class="a" style="left:1458px;top:1134.2px;width:350px;height:45.2px;background:#fff;border:1px solid #7a7a7a"></div>
<div class="t" style="left:1464.5px;top:1145px;font-size:28px">2.2</div>
<div class="a" style="left:1808px;top:1134.2px;width:32px;height:21px;background:#dae6f3;border:1px solid #c8dcf0"></div>
<div class="a" style="left:1808px;top:1156.2px;width:32px;height:22.4px;background:#dae6f3;border:1px solid #c8dcf0"></div>
<div class="t" style="left:1853.5px;top:1145px;font-size:28px">A</div>
<div class="t" style="left:1310.5px;top:1198px;font-size:28.2px;color:#0000ff;text-decoration:underline">Normal (x)</div>
<div class="a" style="left:1458px;top:1188.2px;width:350px;height:45.2px;background:#fff;border:1px solid #7a7a7a"></div>
<div class="t" style="left:1464.5px;top:1199px;font-size:28px">1</div>
<div class="a" style="left:1808px;top:1188.2px;width:32px;height:21px;background:#dae6f3;border:1px solid #c8dcf0"></div>
<div class="a" style="left:1808px;top:1210.2px;width:32px;height:22.4px;background:#dae6f3;border:1px solid #c8dcf0"></div>
<div class="t" style="left:1853.5px;top:1199px;font-size:28px">A</div>
<div class="t" style="left:1310.5px;top:1252px;font-size:28.2px;color:#0000ff;text-decoration:underline">Normal (y)</div>
<div class="a" style="left:1458px;top:1242.2px;width:350px;height:45.2px;background:#fff;border:1px solid #7a7a7a"></div>
<div class="t" style="left:1464.5px;top:1253px;font-size:28px">0</div>
<div class="a" style="left:1808px;top:1242.2px;width:32px;height:21px;background:#dae6f3;border:1px solid #c8dcf0"></div>
<div class="a" style="left:1808px;top:1264.2px;width:32px;height:22.4px;background:#dae6f3;border:1px solid #c8dcf0"></div>
<div class="t" style="left:1853.5px;top:1253px;font-size:28px">A</div>
<div class="t" style="left:1310.5px;top:1306px;font-size:28.2px;color:#0000ff;text-decoration:underline">Normal (z)</div>
<div class="a" style="left:1458px;top:1296.2px;width:350px;height:45.2px;background:#fff;border:1px solid #7a7a7a"></div>
<div class="t" style="left:1464.5px;top:1307px;font-size:28px">0</div>
<div class="a" style="left:1808px;top:1296.2px;width:32px;height:21px;background:#dae6f3;border:1px solid #c8dcf0"></div>
<div class="a" style="left:1808px;top:1318.2px;width:32px;height:22.4px;background:#dae6f3;border:1px solid #c8dcf0"></div>
<div class="t" style="left:1853.5px;top:1307px;font-size:28px">A</div>
<div class="t" style="left:1310.5px;top:1361px;font-size:27.8px;color:#000">Slab width:</div>
<div class="a" style="left:1458px;top:1350.2px;width:350px;height:45.2px;background:#fff;border:1px solid #7a7a7a"></div>
<div class="t" style="left:1464.5px;top:1361px;font-size:28px">10.79</div>
<div class="a" style="left:1808px;top:1350.2px;width:32px;height:21px;background:#dae6f3;border:1px solid #c8dcf0"></div>
<div class="a" style="left:1808px;top:1372.2px;width:32px;height:22.4px;background:#dae6f3;border:1px solid #c8dcf0"></div>
<div class="t" style="left:1853.5px;top:1361px;font-size:28px">A</div>
<svg style="left:0;top:0" width="1945" height="1416"><path d="M1816,1147.0 L1824.6,1137.7 L1833.2,1147.0 Z M1816,1164.0 L1833.2,1164.0 L1824.6,1172.9 Z" fill="#000"/><path d="M1816,1201.0 L1824.6,1191.7 L1833.2,1201.0 Z M1816,1218.0 L1833.2,1218.0 L1824.6,1226.9 Z" fill="#000"/><path d="M1816,1255.0 L1824.6,1245.7 L1833.2,1255.0 Z M1816,1272.0 L1833.2,1272.0 L1824.6,1280.9 Z" fill="#000"/><path d="M1816,1309.0 L1824.6,1299.7 L1833.2,1309.0 Z M1816,1326.0 L1833.2,1326.0 L1824.6,1334.9 Z" fill="#000"/><path d="M1816,1363.0 L1824.6,1353.7 L1833.2,1363.0 Z M1816,1380.0 L1833.2,1380.0 L1824.6,1388.9 Z" fill="#000"/></svg>
<!-- bottom tab bar -->
<div class="a" style="left:0;top:1267px;width:1290px;height:2px;background:#a0a0a0"></div>


<div class="a" style="left:2px;top:1205.5px;width:1286px;height:1px;background:#fdfdfd"></div>
<div class="a" style="left:367px;top:1210px;width:633px;height:46px;border-top:1px solid #dcdcdc;border-right:1px solid #dcdcdc"></div>
<div class="a" style="left:629.5px;top:1210px;width:1px;height:46px;background:#dcdcdc"></div>
<div class="a" style="left:837.5px;top:1210px;width:1px;height:46px;background:#dcdcdc"></div>
<div class="a" style="left:200.7px;top:1206.4px;width:167px;height:49.5px;background:#fff;border:1px solid #dcdcdc;border-bottom:none"></div>
<div class="t" style="left:230.5px;top:1220px;font-size:27px">Particles</div>
<div class="t" style="left:393px;top:1220px;font-size:27.8px">Global Attributes</div>
<div class="t" style="left:659px;top:1220px;font-size:27.8px">Data Tables</div>
<div class="t" style="left:866px;top:1220px;font-size:27px">Surfaces</div>
<svg style="left:0;top:0" width="1945" height="1416">
 <path d="M1251.5,1234.5 L1260,1225.5 L1268.5,1234.5" fill="none" stroke="#555" stroke-width="3"/>
 <g stroke="#a0a0a0" stroke-width="2"><line x1="691" y1="1272" x2="691" y2="1414"/><line x1="1075" y1="1272" x2="1075" y2="1414"/></g>
 <g stroke="#d0d0d0" stroke-width="1.5"><line x1="770" y1="1280" x2="770" y2="1337"/><line x1="994.5" y1="1280" x2="994.5" y2="1337"/></g>
 <g fill="#8c8c8c">
  <rect x="713" y="1293" width="5" height="30"/><path d="M743,1293 V1323 L722,1308 Z"/>
  <path d="M810,1293 V1323 L789,1308 Z M832,1293 V1323 L811,1308 Z"/>
  <path d="M872,1291.5 V1324.6 L899,1308 Z"/>
  <path d="M931,1293 V1323 L952,1308 Z M953,1293 V1323 L975.5,1308 Z"/>
  <path d="M1020.5,1293 V1323 L1041.5,1308 Z"/><rect x="1046" y="1293" width="5" height="30"/>
 </g>
 <!-- key -->
 <g fill="#8c8c8c">
  <circle cx="717.5" cy="1378" r="10.5"/>
  <rect x="722" y="1374" width="27" height="8"/>
  <rect x="737" y="1378" width="5" height="11"/><rect x="744" y="1378" width="5" height="9"/>
 </g>
 <circle cx="716" cy="1378" r="4" fill="#f0f0f0"/>
 <path d="M978,1368.5 L986.5,1360.6 L995,1368.5 Z M978,1384 L995,1384 L986.5,1392 Z" fill="#8c8c8c"/>
 <!-- clock -->
 <circle cx="1036" cy="1378" r="18.5" fill="none" stroke="#4a4a4a" stroke-width="3.5"/>
 <path d="M1035,1366 V1379 L1043,1385" fill="none" stroke="#4a4a4a" stroke-width="3.2"/>
 <!-- magnifier -->
 <circle cx="1104.5" cy="1300.5" r="12" fill="none" stroke="#4a4a4a" stroke-width="4"/>
 <path d="M1113.5,1309.5 L1132,1328" stroke="#4a4a4a" stroke-width="5"/>
 <!-- hand -->
 <path fill="#4a4a4a" d="M1172,1331 Q1163,1322 1160.5,1305 Q1160,1297 1165,1301 L1170,1309 V1292 Q1170,1287 1173.5,1287 Q1177,1287 1177,1292 V1300 V1287.5 Q1177,1283.5 1181,1283.5 Q1185,1283.5 1185,1287.5 V1300 V1289 Q1185,1285 1189,1285 Q1193,1285 1193,1289 V1302 V1295 Q1193,1291 1197,1291 Q1201.5,1291 1201.5,1295 V1316 Q1201.5,1331 1190,1331 Z"/>
 <!-- orbit eye -->
 <ellipse cx="1252" cy="1305.8" rx="26" ry="12.5" fill="none" stroke="#4a4a4a" stroke-width="3"/>
 <circle cx="1252" cy="1305.8" r="8" fill="#4a4a4a"/>
 <path d="M1235,1295 L1243,1290 L1240,1299 Z M1269,1316 L1261,1321 L1264,1312 Z" fill="#4a4a4a"/>
 <!-- zoom extents cube -->
 <g fill="none" stroke="#4a4a4a" stroke-width="2.8">
  <path d="M1085.2,1362.5 V1351.1 H1097.8 M1126.4,1351.1 H1138.9 V1362.5 M1138.9,1391.6 V1404 H1126.4 M1097.8,1404 H1085.2 V1391.6"/>
 </g>
 <path fill="#4a4a4a" d="M1111.9,1358.2 L1133.5,1366.8 V1388.4 L1114,1397.6 L1090.8,1387.9 V1365.7 Z"/>
 <path fill="#f0f0f0" d="M1096.2,1369.5 L1112.4,1363 L1127.5,1369.5 L1112.4,1376 Z M1115.1,1377 L1128,1374.9 V1387.9 L1115.1,1392.7 Z"/>
 <!-- fov -->
 <path fill="none" stroke="#4a4a4a" stroke-width="4" d="M1162,1357 L1201,1378 L1162,1399"/>
 <path fill="none" stroke="#4a4a4a" stroke-width="2.5" d="M1184,1366 Q1190,1378 1184,1390"/>
 <!-- maximize arrows -->
 <g fill="#4a4a4a">
  <path d="M1229,1355 H1242 L1238,1359 L1245,1366 L1240,1371 L1233,1364 L1229,1368 Z"/>
  <path d="M1275,1355 H1262 L1266,1359 L1259,1366 L1264,1371 L1271,1364 L1275,1368 Z"/>
  <path d="M1229,1402 H1242 L1238,1398 L1245,1391 L1240,1386 L1233,1393 L1229,1389 Z"/>
  <path d="M1275,1402 H1262 L1266,1398 L1259,1391 L1264,1386 L1271,1393 L1275,1389 Z"/>
 </g>
</svg>
<div class="a" style="left:764.5px;top:1357px;width:204.5px;height:42px;background:#f0f0f0;border:1px solid #cccccc"></div>
<div class="t" style="left:769px;top:1368px;font-size:28px;color:#8c8c8c">0</div>
<!-- window border -->
<div class="a" style="left:0;top:0;width:1945px;height:1416px;border:2px solid #767676;z-index:100"></div>

</body></html>
